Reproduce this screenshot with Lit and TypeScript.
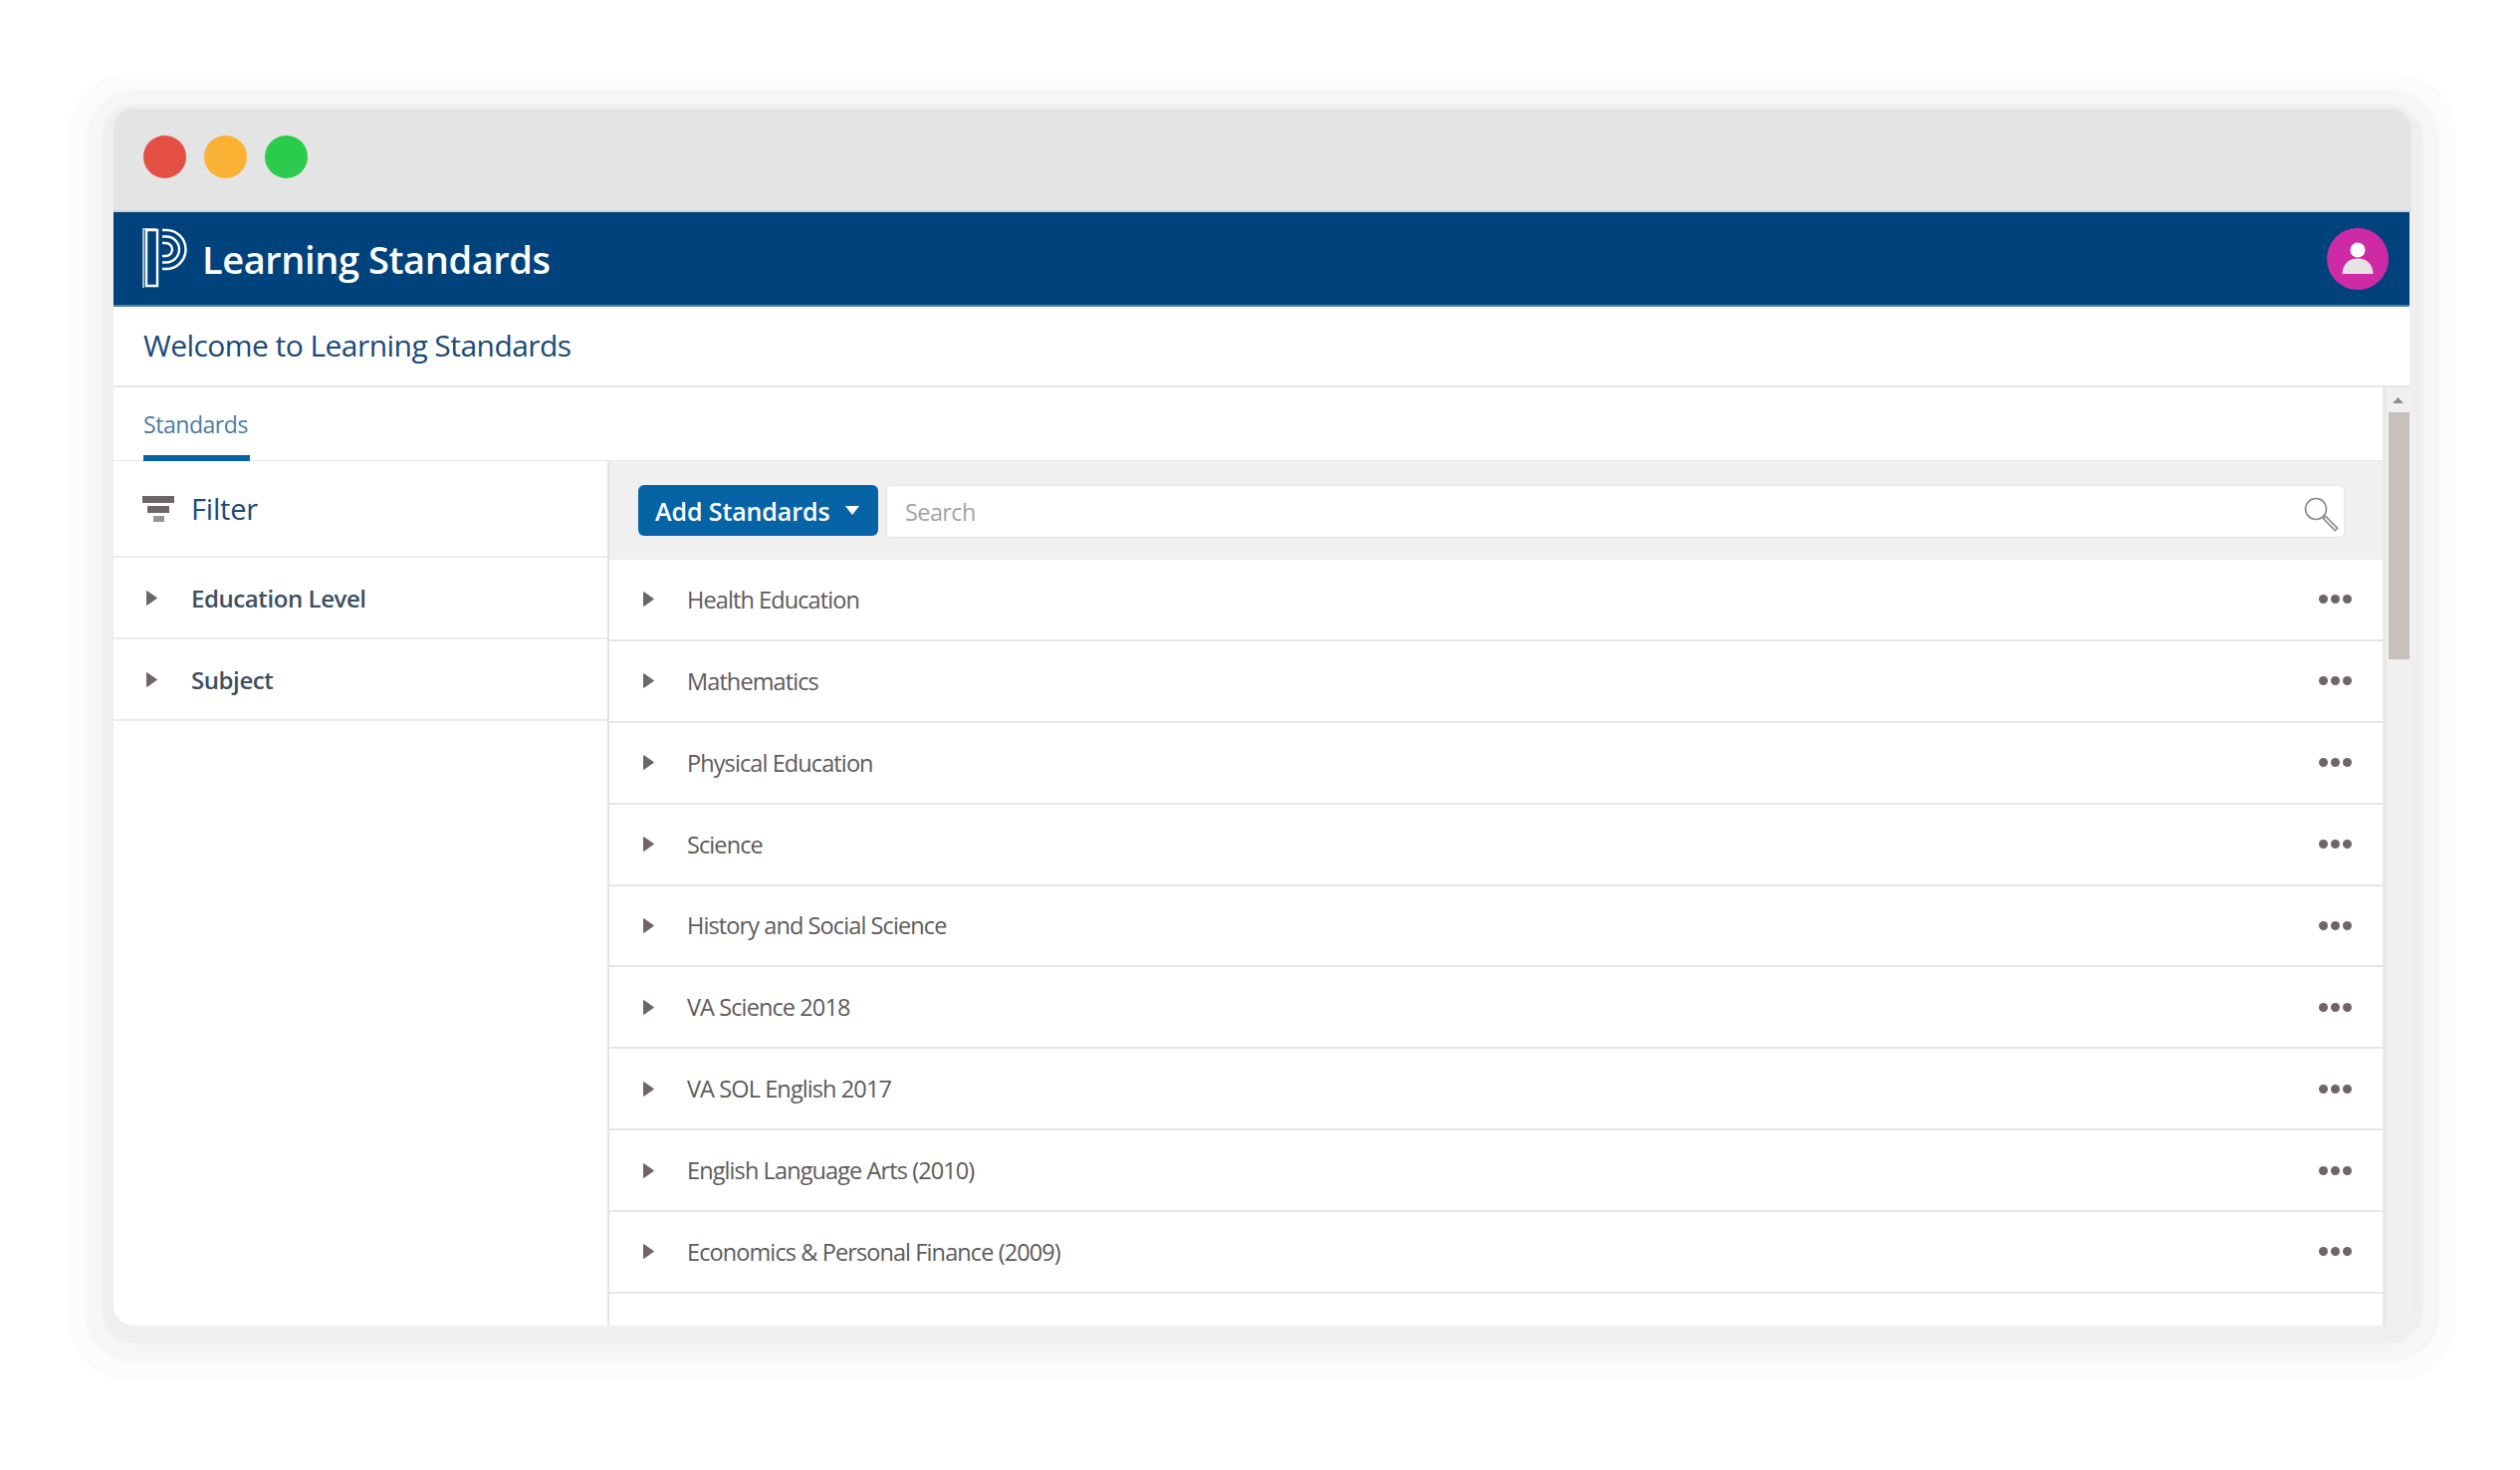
import { LitElement, html, css } from "lit";
import { customElement } from "lit/decorators.js";

const ROWS = [
  "Health Education",
  "Mathematics",
  "Physical Education",
  "Science",
  "History and Social Science",
  "VA Science 2018",
  "VA SOL English 2017",
  "English Language Arts (2010)",
  "Economics & Personal Finance (2009)",
  "Common Core (2017)",
];

const tri = html`<svg class="tri" viewBox="0 0 11 15"><path d="M0.5 0.5L10.500 7.500L0.500 14.500Z" /></svg>`;

@customElement("app-root")
export class AppRoot extends LitElement {
  static styles = css`
    :host {
      display: block;
      height: 1476px;
      background: #fff;
      padding: 109px 109px 0 114px;
      box-sizing: border-box;
      font-family: "Open Sans", "Noto Sans", sans-serif;
      overflow: hidden;
    }
    .window {
      height: 1222px;
      border-radius: 21px;
      background: #f0f0f0;
      display: flex;
      flex-direction: column;
      box-shadow: 0 7px 3px 11px #efefef, 0 9px 2px 28px #f6f6f6, 0 10px 2px 45px #fcfcfc;
    }
    .clip {
      height: 100%;
      border-radius: 21px;
      overflow: hidden;
      display: flex;
      flex-direction: column;
    }
    .titlebar {
      height: 104px;
      flex: none;
      box-sizing: border-box;
      background: #e3e4e3;
      border-bottom: 2px solid #cfd6d8;
      display: flex;
      align-items: flex-start;
      gap: 18px;
      padding: 27px 0 0 30px;
    }
    .dot { width: 43px; height: 43px; border-radius: 50%; }
    .red { background: #e55045; }
    .amber { background: #f9b233; }
    .green { background: #2bcc4d; }
    .content {
      flex: 1;
      min-height: 0;
      margin-right: 2px;
      display: flex;
      flex-direction: column;
      background: #fff;
    }
    .header {
      height: 95px;
      flex: none;
      box-sizing: border-box;
      background: #00427c;
      border-bottom: 2px solid #4d80ab;
      display: flex;
      align-items: center;
      padding: 0 21px 0 29px;
      color: #fff;
    }
    .logo { width: 50px; height: 62px; flex: none; margin-right: 10px; }
    .logo * { fill: none; stroke: #fff; stroke-width: 2.4; }
    .logo .edge { stroke: #a9bdd0; stroke-width: 2; }
    .app-title { font-size: 38px; font-weight: 600; line-height: 1; letter-spacing: -0.42px; flex: 1; }
    .avatar { width: 62px; height: 62px; display: block; margin-top: 1px; }
    .welcome {
      height: 81px;
      flex: none;
      box-sizing: border-box;
      border-bottom: 2px solid #e6e6e6;
      display: flex;
      align-items: center;
      padding: 0 30px 3px;
      font-size: 30px;
      font-weight: 500;
      color: #1a4a78;
      letter-spacing: -0.55px;
    }
    .below { flex: 1; min-height: 0; display: flex; background: #fff; }
    .scroller { flex: 1; min-width: 0; display: flex; flex-direction: column; }
    .tabs {
      height: 74px;
      flex: none;
      box-sizing: border-box;
      padding-left: 30px;
      border-bottom: 1px solid #e6e6e6;
      display: flex;
    }
    .tab {
      width: 107px;
      margin-bottom: -1px;
      box-sizing: border-box;
      border-bottom: 6px solid #0663a5;
      color: #4a7ba6;
      font-size: 23px;
      letter-spacing: -0.45px;
      display: flex;
      align-items: center;
      padding-top: 6px;
      white-space: nowrap;
    }
    .panes { flex: 1; min-height: 0; display: flex; }
    .side { width: 496px; flex: none; border-right: 2px solid #e2e4e4; }
    .filter {
      height: 97px;
      box-sizing: border-box;
      border-bottom: 2px solid #ececec;
      display: flex;
      align-items: center;
      padding-left: 29px;
      color: #1a4a78;
      font-size: 29px;
      font-weight: 500;
      letter-spacing: -0.2px;
    }
    .filter svg { width: 32px; height: 26px; margin-right: 17px; fill: #6e6567; }
    .facet {
      height: 82px;
      box-sizing: border-box;
      border-bottom: 2px solid #ececec;
      display: flex;
      align-items: center;
      padding-left: 33px;
      font-size: 24px;
      font-weight: 600;
      color: #3d4f63;
      letter-spacing: -0.42px;
    }
    .tri { width: 11px; height: 15px; flex: none; fill: #6e6567; stroke: #6e6567; stroke-width: 1; display: block; }
    .facet .tri { margin-right: 34px; }
    .main { flex: 1; min-width: 0; display: flex; flex-direction: column; }
    .toolbar {
      height: 99px;
      flex: none;
      box-sizing: border-box;
      background: #f0f0f0;
      display: flex;
      align-items: flex-start;
      padding: 24px 38px 0 29px;
      gap: 8px;
    }
    .add {
      width: 241px;
      height: 51px;
      flex: none;
      box-sizing: border-box;
      background: #0663a5;
      border-radius: 6px;
      color: #fff;
      font-size: 25px;
      font-weight: 600;
      letter-spacing: -0.1px;
      display: flex;
      align-items: center;
      padding-left: 17px;
      gap: 16px;
    }
    .add svg { width: 14px; height: 9px; fill: #fff; }
    .search {
      flex: 1;
      height: 53px;
      box-sizing: border-box;
      background: #fff;
      border: 1px solid #e6e6e6;
      border-radius: 5px;
      display: flex;
      align-items: center;
      padding: 0 5px 0 18px;
      color: #a5a2a2;
      font-size: 23.5px;
      letter-spacing: -0.6px;
      justify-content: space-between;
    }
    .search svg { width: 38px; height: 38px; fill: none; flex: none; margin-top: 4px; }
    .rows { flex: 1; min-height: 0; overflow: hidden; }
    .row {
      height: 81.875px;
      box-sizing: border-box;
      border-bottom: 2px solid #e2e6e6;
      display: flex;
      align-items: center;
      padding: 0 31px 0 34px;
      font-size: 23.5px;
      color: #5d5a5c;
      letter-spacing: -0.9px;
    }
    .row .tri { margin-right: 33px; }
    .row .label { flex: 1; white-space: nowrap; }
    .more { display: flex; gap: 3px; }
    .more i { width: 9px; height: 9px; border-radius: 50%; background: #6e6567; display: block; }
    .vbar {
      width: 27px;
      flex: none;
      background: #f0f0f0;
      display: flex;
      flex-direction: column;
      align-items: flex-end;
      border-left: 4px solid #e8e9e9;
      box-sizing: border-box;
    }
    .vbar .up { height: 25px; width: 23px; display: flex; align-items: center; justify-content: center; }
    .vbar .up svg { width: 11px; height: 6px; fill: #8f8f8f; }
    .thumb { width: 21px; height: 248px; background: #c8c0bb; }
  `;

  render() {
    return html`
      <div class="window">
        <div class="clip">
          <div class="titlebar">
            <div class="dot red"></div>
            <div class="dot amber"></div>
            <div class="dot green"></div>
          </div>
          <div class="content">
            <div class="header">
              <svg class="logo" viewBox="0 0 50 62">
                <path class="edge" d="M1 60V1H14" />
                <path d="M4 2H15V58H4Z" />
                <path d="M20 2H24A19.5 19.5 0 0 1 24 41H20" />
                <path d="M20 8.500H24A13 13 0 0 1 24 34.500H20" />
                <path d="M20 15H23.500A6.500 6.500 0 0 1 23.500 28H20" />
              </svg>
              <div class="app-title">Learning Standards</div>
              <svg class="avatar" viewBox="0 0 62 62">
                <circle cx="31" cy="31" r="31" fill="#ce2aa6" />
                <circle cx="31" cy="22" r="7.500" fill="#fff" />
                <path d="M15.500 46C16 36 22 30.500 31 30.500S46 36 46.500 46Z" fill="#e6e1e2" />
              </svg>
            </div>
            <div class="welcome">Welcome to Learning Standards</div>
            <div class="below">
              <div class="scroller">
                <div class="tabs"><div class="tab">Standards</div></div>
                <div class="panes">
                  <div class="side">
                    <div class="filter">
                      <svg viewBox="0 0 32 26">
                        <rect x="0" y="0" width="32" height="7" />
                        <rect x="5" y="10" width="22" height="7" />
                        <rect x="11" y="20" width="11" height="6" opacity="0.7" />
                      </svg>
                      Filter
                    </div>
                    <div class="facet">${tri}Education Level</div>
                    <div class="facet">${tri}Subject</div>
                  </div>
                  <div class="main">
                    <div class="toolbar">
                      <div class="add">
                        Add Standards
                        <svg viewBox="0 0 14 9"><path d="M0 0H14L7 9Z" /></svg>
                      </div>
                      <div class="search">
                        Search
                        <svg viewBox="0 0 38 38">
                          <circle cx="15" cy="14" r="10.500" stroke="#8c8684" stroke-width="1.600" />
                          <path d="M23 22L36 35" stroke="#8c8684" stroke-width="5" />
                          <path d="M24 23L35 34" stroke="#e4ecef" stroke-width="2" />
                        </svg>
                      </div>
                    </div>
                    <div class="rows">
                      ${ROWS.map(
                        (r) => html`<div class="row">
                          ${tri}
                          <span class="label">${r}</span>
                          <span class="more"><i></i><i></i><i></i></span>
                        </div>`
                      )}
                    </div>
                  </div>
                </div>
              </div>
              <div class="vbar">
                <div class="up"><svg viewBox="0 0 11 6"><path d="M5.500 0L11 6H0Z" /></svg></div>
                <div class="thumb"></div>
              </div>
            </div>
          </div>
        </div>
      </div>
    `;
  }
}
